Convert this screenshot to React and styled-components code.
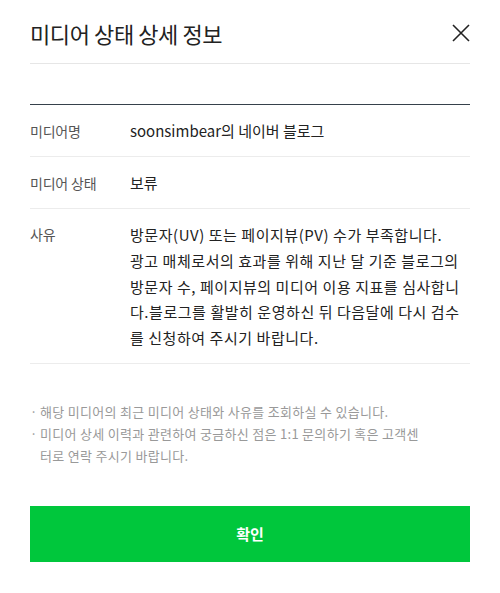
import styled, { createGlobalStyle } from "styled-components";

// -------------------- ESTILOS -------------------- //
const GlobalStyle = createGlobalStyle`
  html, body {
    margin: 0;
    padding: 0;
    background: #fff;
  }
  body {
    font-family: "Noto Sans CJK KR", "Noto Sans", "Liberation Sans", sans-serif;
    color: #222;
  }
`;

const Modal = styled.div`
  width: 500px;
  box-sizing: border-box;
  padding: 0 30px;
`;

const Header = styled.header`
  display: flex;
  align-items: center;
  justify-content: space-between;
  height: 63px;
  border-bottom: 1px solid #e6e6e6;
`;

const Title = styled.h1`
  margin: 0;
  padding-top: 3px;
  font-size: 22px;
  font-weight: 400;
  line-height: 28px;
  color: #222;
  letter-spacing: -0.4px;
`;

const CloseButton = styled.button`
  display: flex;
  padding: 0;
  margin: 2px 0 0;
  border: 0;
  background: none;
  cursor: pointer;
`;

const InfoTable = styled.div`
  margin-top: 40px;
  border-top: 1px solid #36414b;
`;

const InfoRow = styled.div`
  display: grid;
  grid-template-columns: 100px 1fr;
  align-items: start;
  padding: 13px 0 12px;
  border-bottom: 1px solid #ececec;
  line-height: ${({ $multi }) => ($multi ? "25.8px" : "26px")};
`;

const Label = styled.div`
  font-size: 14px;
  color: #555;
  letter-spacing: -0.2px;
`;

const Value = styled.div`
  font-size: 15px;
  color: #222;
  white-space: nowrap;
  letter-spacing: ${({ $wide }) => ($wide ? "0.55px" : "0")};
`;

const Notes = styled.ul`
  list-style: none;
  margin: 37px 0 0;
  padding: 0;
  font-size: 13px;
  line-height: 22px;
  color: #999;
`;

const Note = styled.li`
  display: flex;
  white-space: nowrap;
  letter-spacing: 0.3px;
`;

const Dot = styled.span`
  flex: 0 0 10px;
`;

const ConfirmButton = styled.button`
  display: block;
  width: 100%;
  height: 56px;
  margin-top: 39px;
  border: 0;
  background: #00c73c;
  color: #fff;
  font-family: inherit;
  font-size: 15px;
  font-weight: 700;
  cursor: pointer;
`;

// -------------------- COMPONENTE -------------------- //
export default function App() {
  return (
    <Modal>
      <GlobalStyle />
      <Header>
        <Title>미디어 상태 상세 정보</Title>
        <CloseButton aria-label="닫기">
          <svg width="18" height="18" viewBox="0 0 18 18">
            <path d="M1 1 L17 17 M17 1 L1 17" stroke="#222" strokeWidth="1.6" fill="none" />
          </svg>
        </CloseButton>
      </Header>

      <InfoTable>
        <InfoRow>
          <Label>미디어명</Label>
          <Value>soonsimbear의 네이버 블로그</Value>
        </InfoRow>
        <InfoRow>
          <Label>미디어 상태</Label>
          <Value>보류</Value>
        </InfoRow>
        <InfoRow $multi>
          <Label>사유</Label>
          <Value $wide>
            방문자(UV) 또는 페이지뷰(PV) 수가 부족합니다.<br />
            광고 매체로서의 효과를 위해 지난 달 기준 블로그의<br />
            방문자 수, 페이지뷰의 미디어 이용 지표를 심사합니<br />
            다.블로그를 활발히 운영하신 뒤 다음달에 다시 검수<br />
            를 신청하여 주시기 바랍니다.
          </Value>
        </InfoRow>
      </InfoTable>

      <Notes>
        <Note>
          <Dot>·</Dot>
          <span>해당 미디어의 최근 미디어 상태와 사유를 조회하실 수 있습니다.</span>
        </Note>
        <Note>
          <Dot>·</Dot>
          <span>
            미디어 상세 이력과 관련하여 궁금하신 점은 1:1 문의하기 혹은 고객센<br />
            터로 연락 주시기 바랍니다.
          </span>
        </Note>
      </Notes>

      <ConfirmButton>확인</ConfirmButton>
    </Modal>
  );
}
